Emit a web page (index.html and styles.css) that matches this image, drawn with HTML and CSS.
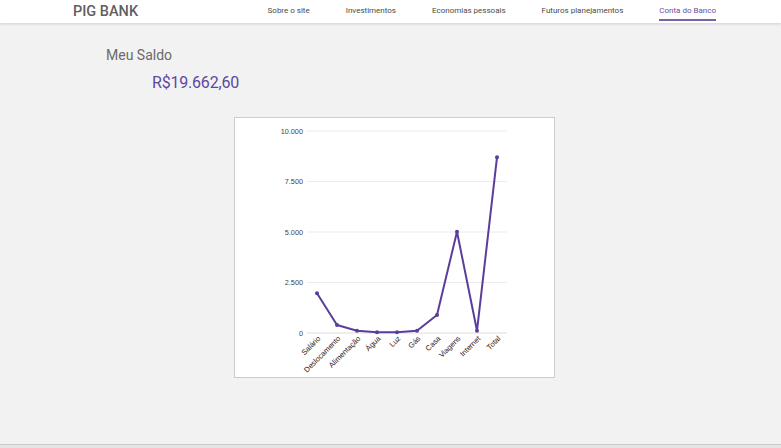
FILE: index.html
```html
<!DOCTYPE html>
<html lang="pt-BR">
<head>
<meta charset="utf-8">
<title>PIG BANK</title>
<link rel="stylesheet" href="styles.css">
</head>
<body>
<div class="page">
  <header class="topbar">
    <div class="logo">PIG BANK</div>
    <nav class="nav">
      <a class="nav-link">Sobre o site</a>
      <a class="nav-link">Investimentos</a>
      <a class="nav-link">Economias pessoais</a>
      <a class="nav-link">Futuros planejamentos</a>
      <a class="nav-link active">Conta do Banco</a>
    </nav>
  </header>
  <main class="content">
    <h1 class="title">Meu Saldo</h1>
    <div class="amount">R$19.662,60</div>
    <div class="chart-card">
      <svg class="chart" width="319" height="259" viewBox="235 118 319 259">
        <g class="grid">
          <line x1="307" y1="131" x2="507" y2="131"/>
          <line x1="307" y1="181.5" x2="507" y2="181.5"/>
          <line x1="307" y1="232" x2="507" y2="232"/>
          <line x1="307" y1="282.5" x2="507" y2="282.5"/>
          <line class="base" x1="307" y1="333" x2="507" y2="333"/>
        </g>
        <g class="ylabels">
          <text x="303" y="133.5">10.000</text>
          <text x="303" y="184">7.500</text>
          <text x="303" y="234.5">5.000</text>
          <text x="303" y="285">2.500</text>
          <text x="303" y="335.5">0</text>
        </g>
        <polyline class="series" points="317,293.3 337,325 357,330.7 377,332.3 397,332.3 417,330.7 437,315 457,231.7 477,330.7 497,157.3"/>
        <g class="dots">
          <circle cx="317" cy="293.3" r="2"/>
          <circle cx="337" cy="325" r="2"/>
          <circle cx="357" cy="330.7" r="2"/>
          <circle cx="377" cy="332.3" r="2"/>
          <circle cx="397" cy="332.3" r="2"/>
          <circle cx="417" cy="330.7" r="2"/>
          <circle cx="437" cy="315" r="2"/>
          <circle cx="457" cy="231.7" r="2"/>
          <circle cx="477" cy="330.7" r="2"/>
          <circle cx="497" cy="157.3" r="2"/>
        </g>
        <g class="xlabels">
          <text transform="translate(321,339) rotate(-45)">Salário</text>
          <text transform="translate(341,339) rotate(-45)">Deslocamento</text>
          <text transform="translate(361,339) rotate(-45)">Alimentação</text>
          <text transform="translate(381,339) rotate(-45)">Água</text>
          <text transform="translate(401,339) rotate(-45)">Luz</text>
          <text transform="translate(421,339) rotate(-45)">Gás</text>
          <text transform="translate(441,339) rotate(-45)">Casa</text>
          <text transform="translate(461,339) rotate(-45)">Viagens</text>
          <text transform="translate(481,339) rotate(-45)">Internet</text>
          <text transform="translate(501,339) rotate(-45)">Total</text>
        </g>
      </svg>
    </div>
  </main>
</div>
</body>
</html>
```

FILE: styles.css
```css
html {
  background: #e6e6e6;
}
body {
  margin: 0;
  font-family: Roboto, "Liberation Sans", sans-serif;
}
.page {
  min-height: 444px;
  background: #f2f2f2;
  border-bottom: 1px solid #c9c9c9;
}
.topbar {
  height: 23px;
  background: #ffffff;
  box-shadow: 0 1px 3px rgba(0, 0, 0, 0.14);
  display: flex;
  align-items: flex-start;
  justify-content: space-between;
  padding: 0 65px 0 73px;
  position: relative;
}
.logo {
  font-size: 14.5px;
  font-weight: 500;
  color: #5f5f5f;
  line-height: 23px;
}
.nav {
  display: flex;
  gap: 36px;
}
.nav-link {
  display: block;
  font-size: 8px;
  line-height: 9px;
  color: #4a4a4a;
  padding: 6px 0 4px;
  border-bottom: 2px solid transparent;
}
.nav-link.active {
  color: #6a4f9e;
  border-bottom-color: #7a62a8;
}
.content {
  padding: 24px 0 0 106px;
}
.title {
  margin: 0;
  font-size: 14px;
  font-weight: 400;
  line-height: 16px;
  color: #6a6a6a;
}
.amount {
  margin: 11px 0 0 46px;
  font-size: 16px;
  line-height: 18px;
  letter-spacing: -0.2px;
  color: #5e46a0;
}
.chart-card {
  margin: 25px 0 0 128px;
  width: 319px;
  height: 259px;
  background: #ffffff;
  border: 1px solid #cccccc;
}
.chart {
  display: block;
}
.grid line {
  stroke: #ebebeb;
  stroke-width: 1;
}
.grid line.base {
  stroke: #dcdcdc;
}
.ylabels text {
  font-family: "Liberation Sans", Arial, sans-serif;
  font-size: 7.3px;
  fill: #444444;
  text-anchor: end;
}
.xlabels text {
  font-family: "Liberation Sans", Arial, sans-serif;
  font-size: 7.5px;
  fill: #222222;
  text-anchor: end;
}
.series {
  fill: none;
  stroke: #5b3d9b;
  stroke-width: 2;
  stroke-linejoin: round;
}
.dots circle {
  fill: #5b3d9b;
}
```
